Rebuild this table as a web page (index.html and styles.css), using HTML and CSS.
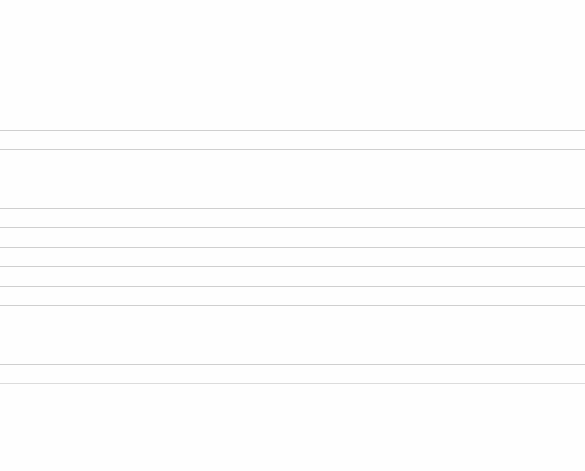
FILE: index.html
```html
<!DOCTYPE html>
<html lang="en">
<head>
    <meta charset="UTF-8">
    <meta name="viewport" content="width=device-width, initial-scale=1.0">
    <title>Sheet</title>
    <link rel="stylesheet" href="styles.css">
</head>
<body>
    <main class="sheet">
        <section class="group">
            <div class="row"></div>
        </section>
        <section class="group">
            <div class="row"></div>
            <div class="row"></div>
            <div class="row"></div>
            <div class="row"></div>
            <div class="row"></div>
        </section>
        <section class="group">
            <div class="row"></div>
        </section>
    </main>
</body>
</html>
```

FILE: styles.css
```css
body, html{ width:100%; height:100%; }
body{
    margin: 0;
    background: #fefefe;
    font-family: "Liberation Sans", Arial, sans-serif;
    overflow: hidden;
}
.sheet{
    padding-top: 130px;
    display: flex;
    flex-flow: column nowrap;
    gap: 58px;
}
.group{ border-top: 1px solid #cfcfcf; }
.row{ height: 18px; border-bottom: 1px solid #cfcfcf; }
.row:nth-child(even){ height: 19px; }
.group:last-child .row{ border-bottom-color: #dcdcdc; }
```
